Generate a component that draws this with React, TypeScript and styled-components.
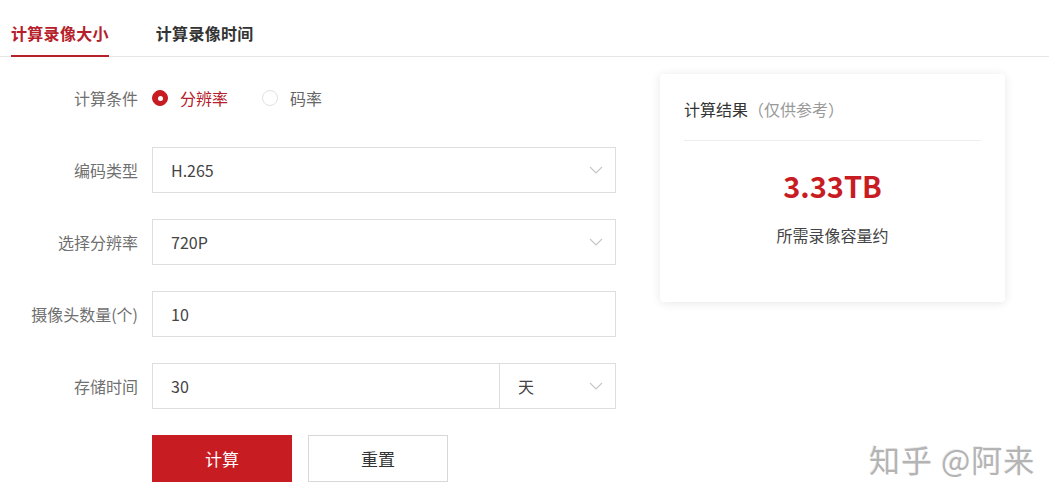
import React, { useState } from "react"
import styled, { createGlobalStyle } from "styled-components"

const RED = "#c81c23"

const GlobalStyle = createGlobalStyle`
  html, body {
    margin: 0;
    padding: 0;
    background: #fff;
  }
  body {
    font-family: "Noto Sans CJK SC", "Noto Sans", sans-serif;
    color: #333;
  }
`

const Page = styled.div`
  position: relative;
  width: 1063px;
  height: 500px;
  overflow: hidden;
`

const TabBar = styled.div`
  display: flex;
  gap: 47px;
  height: 56px;
  padding-left: 11px;
  margin-right: 14px;
  border-bottom: 1px solid #e6e6e6;
`

const Tab = styled.div<{ $active?: boolean }>`
  display: flex;
  align-items: center;
  padding-top: 10px;
  box-sizing: border-box;
  font-size: 16px;
  font-weight: 700;
  letter-spacing: 0.3px;
  color: ${p => (p.$active ? "#b5202a" : "#333")};
  border-bottom: 2px solid ${p => (p.$active ? "#b5202a" : "transparent")};
  margin-bottom: -1px;
`

const Main = styled.div`
  display: flex;
  align-items: flex-start;
  padding-top: 18px;
`

const Form = styled.form`
  display: flex;
  flex-direction: column;
  gap: 26px;
`

const Row = styled.div`
  display: flex;
  align-items: center;
  height: 46px;
  gap: 14px;
`

const Label = styled.label`
  width: 138px;
  text-align: right;
  font-size: 16px;
  color: #707070;
  white-space: nowrap;
`

const RadioGroup = styled.div`
  display: flex;
  align-items: center;
  gap: 34px;
`

const RadioItem = styled.div<{ $checked?: boolean }>`
  display: flex;
  align-items: center;
  gap: 12px;
  font-size: 16px;
  color: ${p => (p.$checked ? "#b5202a" : "#666")};
  cursor: pointer;
`

const RadioDot = styled.span<{ $checked?: boolean }>`
  width: 16px;
  height: 16px;
  border-radius: 50%;
  box-sizing: border-box;
  display: flex;
  align-items: center;
  justify-content: center;
  background: ${p => (p.$checked ? RED : "#fff")};
  border: 1px solid ${p => (p.$checked ? RED : "#e2e2e2")};
  &::after {
    content: "";
    width: 5px;
    height: 5px;
    border-radius: 50%;
    background: #fff;
    display: ${p => (p.$checked ? "block" : "none")};
  }
`

const Field = styled.div`
  display: flex;
  width: 464px;
  height: 46px;
`

const Box = styled.div<{ $width?: number }>`
  display: flex;
  align-items: center;
  justify-content: space-between;
  box-sizing: border-box;
  height: 46px;
  flex: ${p => (p.$width ? `0 0 ${p.$width}px` : "1")};
  padding: 0 12px 0 18px;
  border: 1px solid #dedede;
  font-size: 16px;
  color: #444;
  & + & {
    border-left: none;
  }
`

const Value = styled.span``

const Chevron = () => (
  <svg width="14" height="8" viewBox="0 0 14 8">
    <polyline points="1,1 7,7 13,1" fill="none" stroke="#c8c8c8" strokeWidth="1.2" />
  </svg>
)

const Buttons = styled.div`
  display: flex;
  gap: 16px;
  margin-left: 152px;
  height: 47px;
`

const Button = styled.button<{ $primary?: boolean }>`
  width: 140px;
  height: 47px;
  font: inherit;
  font-size: 17px;
  cursor: pointer;
  border: 1px solid ${p => (p.$primary ? RED : "#d8d8d8")};
  background: ${p => (p.$primary ? RED : "#fff")};
  color: ${p => (p.$primary ? "#fff" : "#333")};
`

const Card = styled.div`
  width: 345px;
  height: 228px;
  margin-left: 44px;
  margin-top: -1px;
  box-sizing: border-box;
  padding: 0 24px;
  border-radius: 4px;
  background: #fff;
  box-shadow: 0 1px 10px rgba(0, 0, 0, 0.1);
`

const CardHead = styled.div`
  padding: 24px 0 20px;
  line-height: 22px;
  font-size: 16px;
  color: #333;
  border-bottom: 1px solid #eeeeee;
`

const Muted = styled.span`
  color: #999;
`

const Amount = styled.div`
  margin-top: 26px;
  text-align: center;
  font-size: 29px;
  line-height: 36px;
  font-weight: 700;
  color: ${RED};
`

const Caption = styled.div`
  margin-top: 20px;
  text-align: center;
  font-size: 16px;
  color: #444;
`

const Watermark = styled.div`
  position: absolute;
  left: 869px;
  top: 436px;
  font-size: 31px;
  letter-spacing: 1px;
  color: #b4b4b4;
  text-shadow: 1px 1px 0 #fff, -1px -1px 0 rgba(0, 0, 0, 0.08);
  pointer-events: none;
`

const App: React.FC = () => {
  const [mode, setMode] = useState("res")

  return (
    <Page>
      <GlobalStyle />
      <TabBar>
        <Tab $active>计算录像大小</Tab>
        <Tab>计算录像时间</Tab>
      </TabBar>
      <Main>
        <Form onSubmit={e => e.preventDefault()}>
          <Row>
            <Label>计算条件</Label>
            <RadioGroup>
              <RadioItem $checked={mode === "res"} onClick={() => setMode("res")}>
                <RadioDot $checked={mode === "res"} />
                分辨率
              </RadioItem>
              <RadioItem $checked={mode === "rate"} onClick={() => setMode("rate")}>
                <RadioDot $checked={mode === "rate"} />
                码率
              </RadioItem>
            </RadioGroup>
          </Row>
          <Row>
            <Label>编码类型</Label>
            <Field>
              <Box>
                <Value>H.265</Value>
                <Chevron />
              </Box>
            </Field>
          </Row>
          <Row>
            <Label>选择分辨率</Label>
            <Field>
              <Box>
                <Value>720P</Value>
                <Chevron />
              </Box>
            </Field>
          </Row>
          <Row>
            <Label>摄像头数量(个)</Label>
            <Field>
              <Box>
                <Value>10</Value>
              </Box>
            </Field>
          </Row>
          <Row>
            <Label>存储时间</Label>
            <Field>
              <Box>
                <Value>30</Value>
              </Box>
              <Box $width={116}>
                <Value>天</Value>
                <Chevron />
              </Box>
            </Field>
          </Row>
          <Buttons>
            <Button $primary type="submit">计算</Button>
            <Button type="button">重置</Button>
          </Buttons>
        </Form>
        <Card>
          <CardHead>
            计算结果<Muted>（仅供参考）</Muted>
          </CardHead>
          <Amount>3.33TB</Amount>
          <Caption>所需录像容量约</Caption>
        </Card>
      </Main>
      <Watermark>知乎 @阿来</Watermark>
    </Page>
  )
}

export default App
